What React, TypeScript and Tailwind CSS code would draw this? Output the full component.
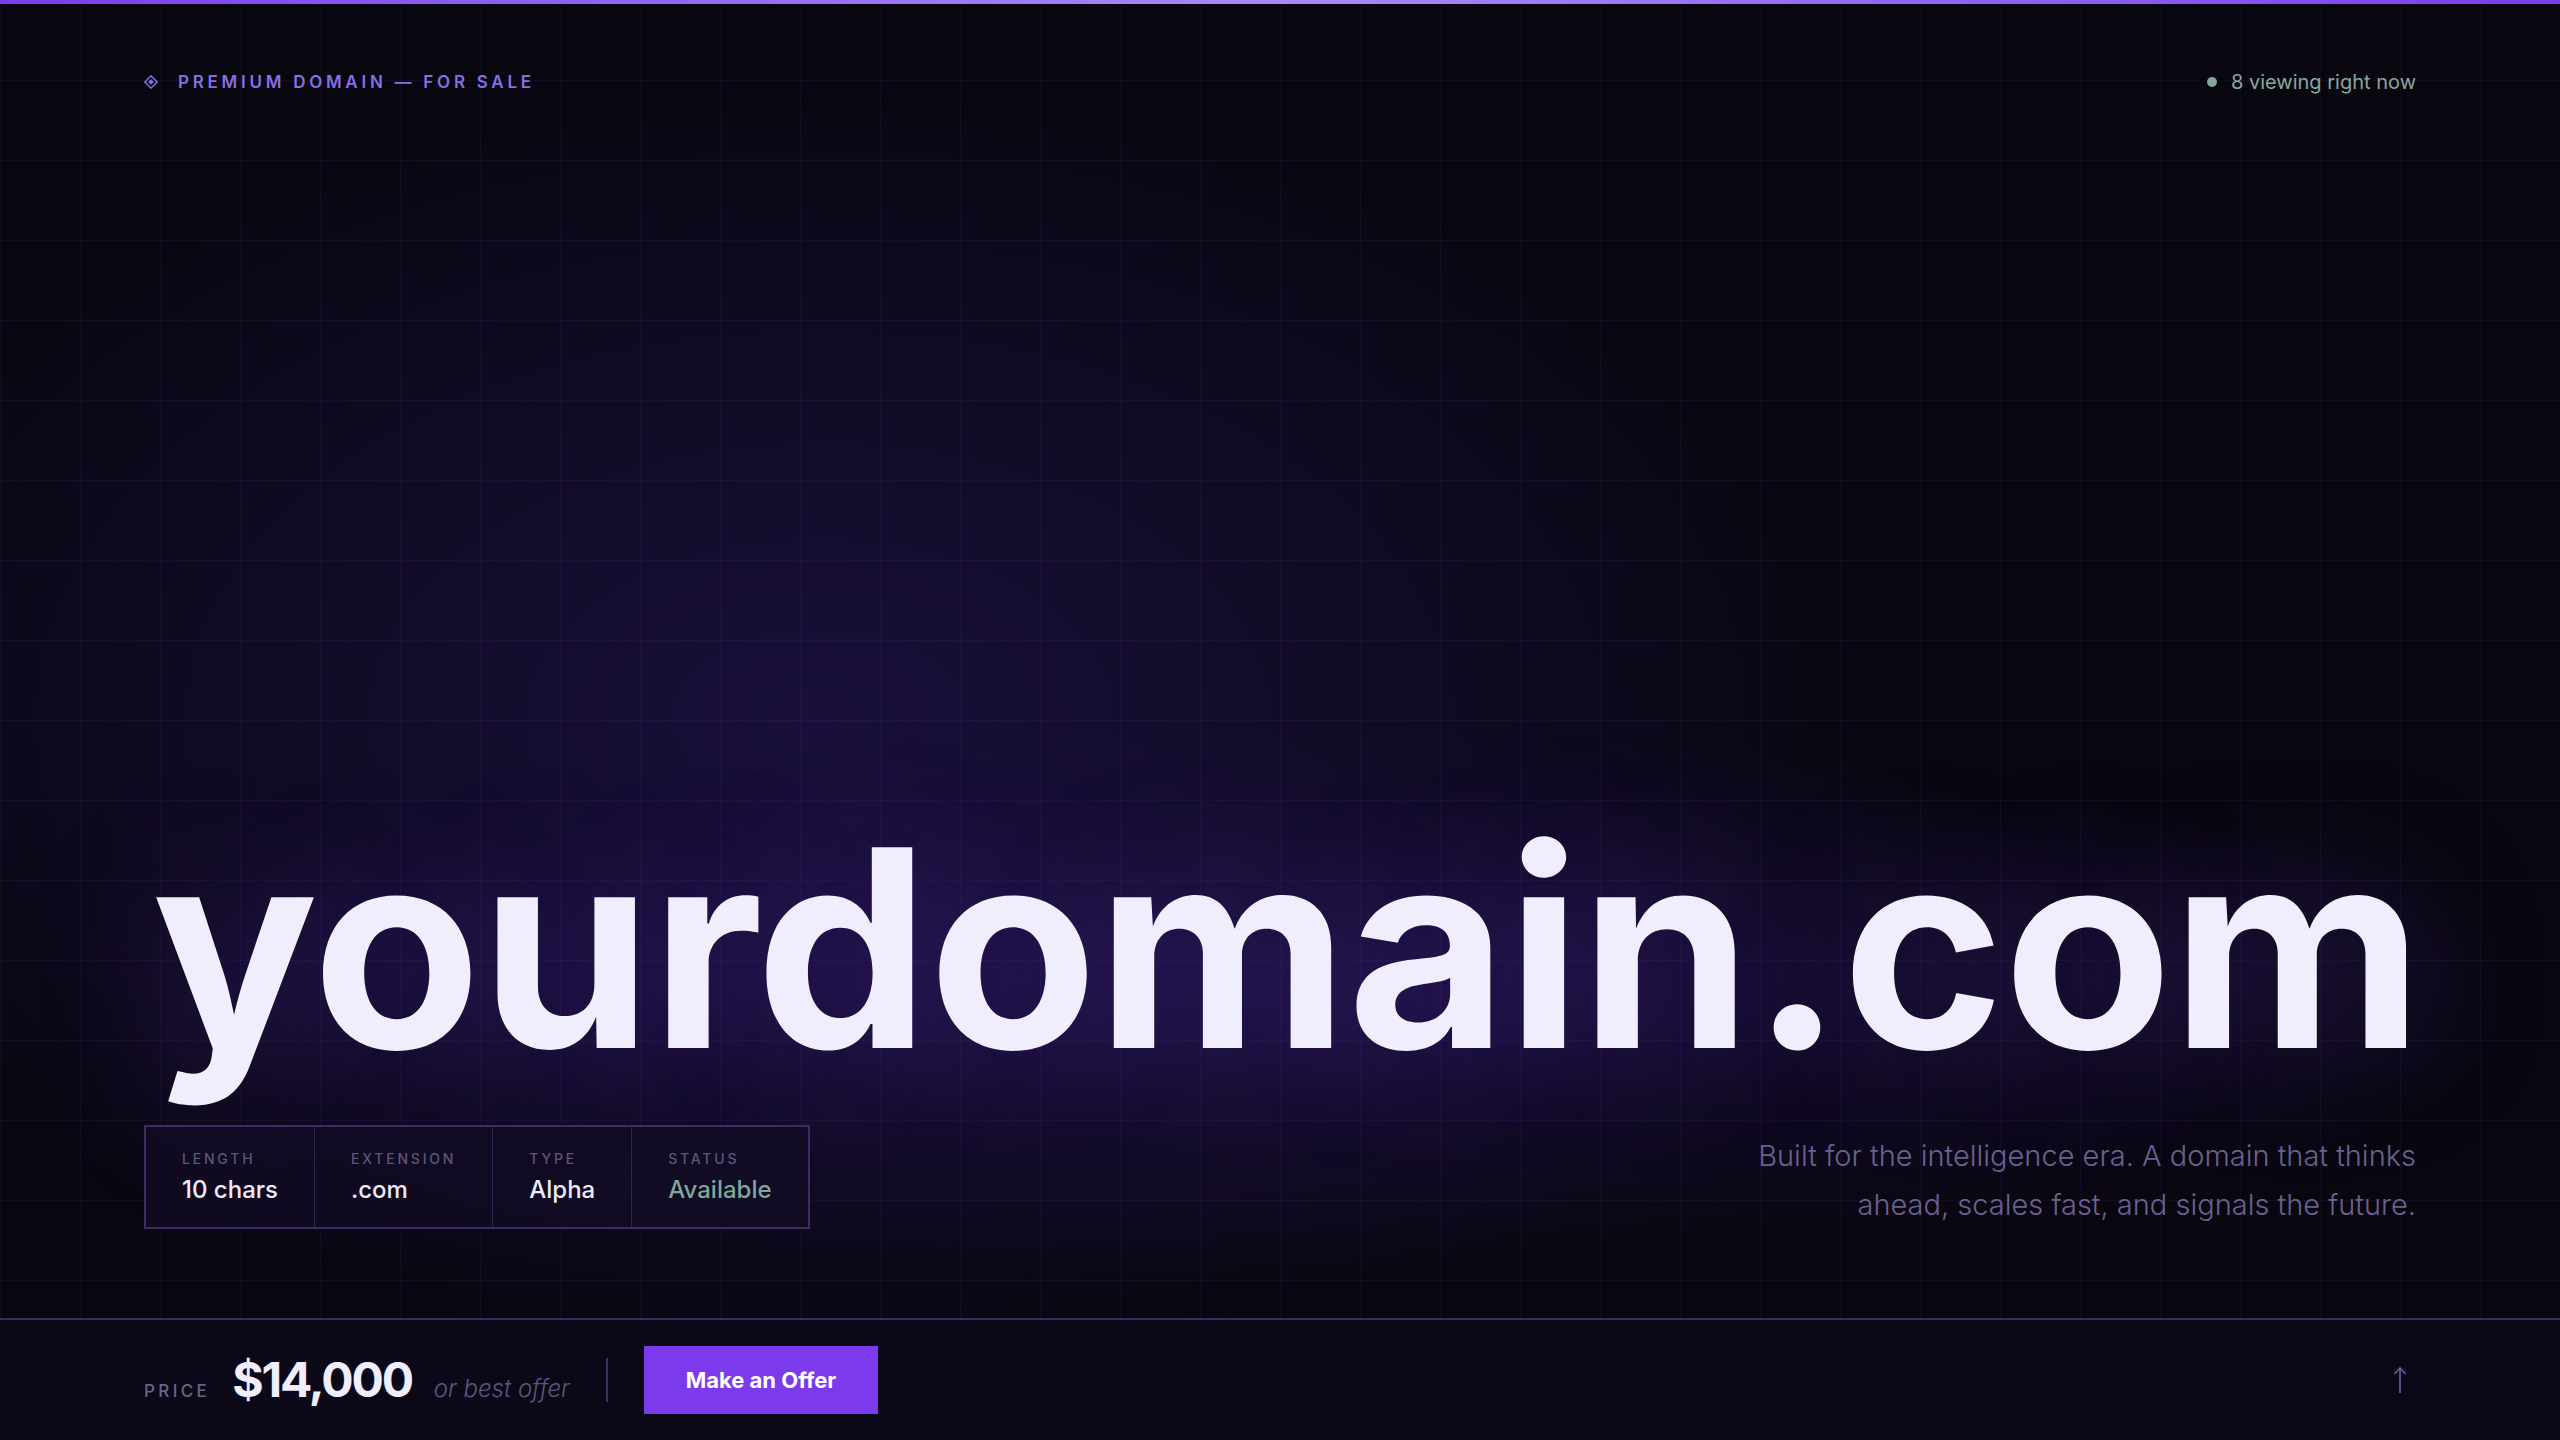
import React from "react";

const specs = [
  { label: "Length", value: "10 chars", tone: "text-[#eeeaf9]" },
  { label: "Extension", value: ".com", tone: "text-[#eeeaf9]" },
  { label: "Type", value: "Alpha", tone: "text-[#eeeaf9]" },
  { label: "Status", value: "Available", tone: "text-[#7fa898]" },
];

function DiamondMark() {
  return (
    <svg width="14" height="14" viewBox="0 0 13 13" className="shrink-0">
      <path d="M6.5 0.8 L12.2 6.5 L6.5 12.2 L0.8 6.5 Z" fill="none" stroke="#8a6ee6" strokeWidth="1.3" />
      <path d="M6.5 3.9 L9.1 6.5 L6.5 9.1 L3.9 6.5 Z" fill="#8a6ee6" />
    </svg>
  );
}

function ArrowUp() {
  return (
    <svg width="14" height="28" viewBox="0 0 14 28" fill="none" stroke="#6b5f95" strokeWidth="1.6">
      <path d="M7 27 V2" />
      <path d="M1.5 8 L7 2 L12.5 8" />
    </svg>
  );
}

export default function App() {
  return (
    <div className="relative flex h-screen w-full flex-col overflow-hidden bg-[#08060e] font-['Inter','Liberation_Sans',sans-serif] text-white">
      {/* glow */}
      <div className="pointer-events-none absolute inset-0 bg-[radial-gradient(ellipse_55%_60%_at_32%_50%,rgba(30,18,70,0.8),transparent_80%),radial-gradient(ellipse_60%_24%_at_52%_70%,rgba(40,22,88,0.5),transparent_80%)]" />
      {/* grid */}
      <div className="pointer-events-none absolute inset-0 bg-[linear-gradient(to_right,rgba(120,90,220,0.07)_1px,transparent_1px),linear-gradient(to_bottom,rgba(120,90,220,0.07)_1px,transparent_1px)] bg-[size:80px_80px]" />

      <div className="relative h-1 w-full shrink-0 bg-gradient-to-r from-[#7c3aed] via-[#a78bfa] to-[#7c3aed]" />

      <main className="relative flex flex-1 flex-col px-[144px] pb-[89px]">
        <header className="flex items-center justify-between pt-[64px]">
          <div className="flex items-center gap-[20px]">
            <DiamondMark />
            <span className="text-[17px] font-semibold uppercase leading-[28px] tracking-[0.22em] text-[#8a6ee6]">
              Premium Domain — For Sale
            </span>
          </div>
          <div className="flex items-center gap-[14px]">
            <span className="h-[10px] w-[10px] rounded-full bg-[#7fa898]" />
            <span className="text-[20px] leading-[28px] text-[#8aa89c]">8 viewing right now</span>
          </div>
        </header>

        <div className="flex-1" />

        <h1 className="ml-[8px] text-[276px] font-bold leading-none tracking-[-0.004em] text-[#f0edfc] [text-shadow:0_0_140px_rgba(110,60,220,0.32)]">
          yourdomain.com
        </h1>

        <div className="mt-[39px] flex items-end justify-between">
          <div className="flex border-2 border-[#3b2d63] bg-[#120b24]/80">
            {specs.map((s, i) => (
              <div
                key={s.label}
                className={`flex flex-col gap-[6px] px-[36px] pb-[22px] pt-[22px] ${i > 0 ? "border-l border-[#2e2552]" : ""}`}
              >
                <span className="text-[14px] font-medium uppercase leading-[20px] tracking-[0.2em] text-[#5d567c]">
                  {s.label}
                </span>
                <span className={`text-[24px] font-medium leading-[30px] ${s.tone}`}>{s.value}</span>
              </div>
            ))}
          </div>

          <p className="text-right text-[29px] font-light leading-[49px] text-[#6b6190]">
            Built for the intelligence era. A domain that thinks
            <br />
            ahead, scales fast, and signals the future.
          </p>
        </div>
      </main>

      <footer className="relative flex h-[122px] shrink-0 items-center justify-between border-t-2 border-[#3a2e5f] bg-[#0b0818] px-[144px]">
        <div className="flex items-center">
          <div className="flex items-baseline">
            <span className="text-[17px] font-medium uppercase tracking-[0.2em] text-[#6b6488]">Price</span>
            <span className="ml-[22px] text-[48px] font-bold tracking-[-0.045em] text-[#f0edfc]">$14,000</span>
            <span className="ml-[22px] text-[24px] font-light italic text-[#5e5680]">or best offer</span>
          </div>
          <span className="mx-[36px] h-[44px] w-[2px] bg-[#3b3060]" />
          <button className="flex h-[68px] items-center bg-[#7c3aed] px-[42px] text-[22px] font-bold text-white">
            Make an Offer
          </button>
        </div>
        <div className="flex w-8 justify-center">
          <ArrowUp />
        </div>
      </footer>
    </div>
  );
}
